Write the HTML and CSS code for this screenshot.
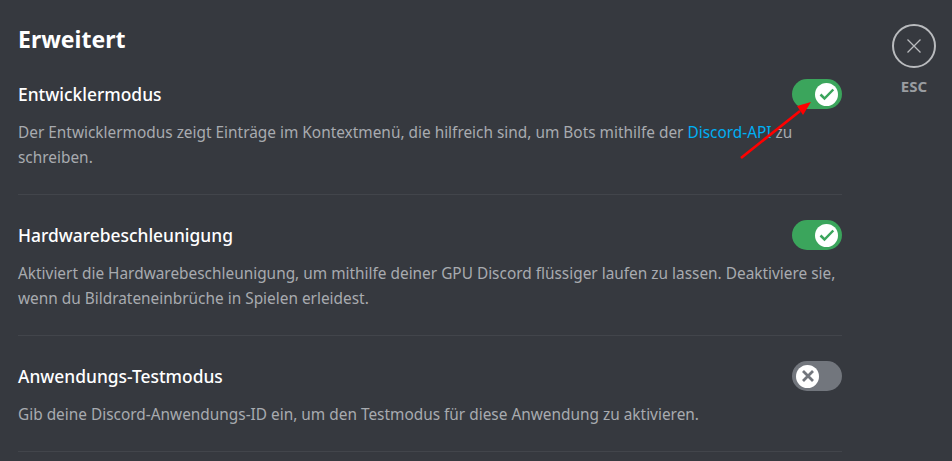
FILE: index.html
```html
<!DOCTYPE html>
<html lang="de">
<head>
  <meta charset="UTF-8">
  <meta name="viewport" content="width=device-width, initial-scale=1.0">
  <title>Erweitert</title>
  <link rel="stylesheet" href="styles.css">
</head>
<body>
  <main class="content">
    <h1>Erweitert</h1>

    <section class="option">
      <div class="option-head">
        <h2>Entwicklermodus</h2>
        <div class="switch on">
          <span class="knob">
            <svg viewBox="0 0 20 20"><path d="M3.5 10.5l4 4 8.8-9" fill="none" stroke="#3ba55c" stroke-width="2.5"/></svg>
          </span>
        </div>
      </div>
      <p>Der Entwicklermodus zeigt Einträge im Kontextmenü, die hilfreich sind, um Bots mithilfe der <a href="#">Discord-API</a> zu schreiben.</p>
    </section>

    <section class="option">
      <div class="option-head">
        <h2>Hardwarebeschleunigung</h2>
        <div class="switch on">
          <span class="knob">
            <svg viewBox="0 0 20 20"><path d="M3.5 10.5l4 4 8.8-9" fill="none" stroke="#3ba55c" stroke-width="2.5"/></svg>
          </span>
        </div>
      </div>
      <p>Aktiviert die Hardwarebeschleunigung, um mithilfe deiner GPU Discord flüssiger laufen zu lassen. Deaktiviere sie, wenn du Bildrateneinbrüche in Spielen erleidest.</p>
    </section>

    <section class="option">
      <div class="option-head">
        <h2>Anwendungs-Testmodus</h2>
        <div class="switch">
          <span class="knob">
            <svg viewBox="0 0 20 20"><path d="M5 5l10 10M15 5L5 15" fill="none" stroke="#72767d" stroke-width="2.8"/></svg>
          </span>
        </div>
      </div>
      <p>Gib deine Discord-Anwendungs-ID ein, um den Testmodus für diese Anwendung zu aktivieren.</p>
    </section>
  </main>

  <aside class="tools">
    <div class="close">
      <svg viewBox="0 0 18 18"><path d="M2.5 2.5l13 13M15.5 2.5l-13 13" fill="none" stroke="#b9bbbe" stroke-width="1.3"/></svg>
    </div>
    <span class="esc">ESC</span>
  </aside>

  <!-- roter Pfeil aus dem Screenshot -->
  <svg class="arrow" viewBox="0 0 952 461">
    <path d="M741 158L800 111" stroke="#f00" stroke-width="2.6" fill="none"/>
    <path d="M811 102L797 106 803 115Z" fill="#f00"/>
  </svg>
</body>
</html>
```

FILE: styles.css
```css
html, body {
    margin: 0;
    height: 100%;
}

body {
    background: #36393f;
    display: flex;
    overflow: hidden;
    font-family: 'Noto Sans', 'Open Sans', sans-serif;
}

/* Inhalt */
.content {
    width: 824px;
    margin-left: 18px;
    padding-top: 24px;
}

h1 {
    margin: 0 0 25px;
    font-size: 23px;
    line-height: 30px;
    font-weight: 700;
    color: #ffffff;
}

/* Optionen */
.option {
    padding-bottom: 24px;
    margin-bottom: 25px;
    border-bottom: 1px solid #42454b;
}

.option-head {
    display: flex;
    justify-content: space-between;
    align-items: center;
    height: 30px;
}

h2 {
    margin: 0;
    font-size: 17.4px;
    font-weight: 500;
    color: #ffffff;
}

.option p {
    margin: 11px 0 0;
    font-size: 15.4px;
    line-height: 25px;
    color: #a8abb0;
}

.option a {
    color: #00aff4;
    text-decoration: none;
}

/* Schalter */
.switch {
    width: 50px;
    height: 30px;
    border-radius: 15px;
    background: #72767d;
    display: flex;
    align-items: center;
    padding: 0 4px;
    box-sizing: border-box;
}

.switch.on {
    background: #3ba55c;
    justify-content: flex-end;
}

.knob {
    width: 23px;
    height: 23px;
    border-radius: 50%;
    background: #ffffff;
    display: flex;
    align-items: center;
    justify-content: center;
}

.knob svg {
    width: 20px;
    height: 20px;
}

/* ESC */
.tools {
    margin-left: 50px;
    padding-top: 24px;
    display: flex;
    flex-direction: column;
    align-items: center;
    width: 44px;
}

.close {
    width: 44px;
    height: 44px;
    box-sizing: border-box;
    border: 2px solid #b9bbbe;
    border-radius: 50%;
    display: flex;
    align-items: center;
    justify-content: center;
}

.close svg {
    width: 18px;
    height: 18px;
}

.esc {
    margin-top: 8px;
    font-size: 15px;
    font-weight: 700;
    color: #9a9da1;
}

.arrow {
    position: absolute;
    top: 0;
    left: 0;
    width: 952px;
    height: 461px;
    pointer-events: none;
}
```
